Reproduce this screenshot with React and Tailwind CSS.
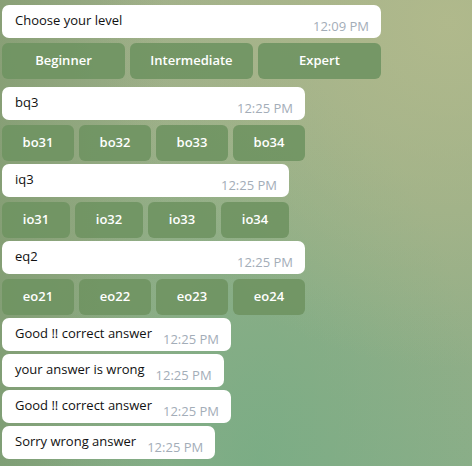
import React from "react";

const font = { fontFamily: '"Open Sans", "Noto Sans", sans-serif' };

function Bubble({ text, time, width, className = "" }) {
  return (
    <div
      className={`h-[33px] flex bg-white rounded-[7px] pl-[13px] pr-[12px] ${className}`}
      style={width ? { width } : undefined}
    >
      <span className="pt-[6px] text-[13px] leading-[18px] text-[#111] whitespace-nowrap">{text}</span>
      <span className="ml-auto pl-[11px] self-end pb-[4px] text-[13px] leading-[16px] text-[#a3adb8] whitespace-nowrap">
        {time}
      </span>
    </div>
  );
}

function Keyboard({ options, width, cols }) {
  return (
    <div
      className={`grid gap-[5px] mt-[5px] ${cols === 3 ? "grid-cols-3" : "grid-cols-4"}`}
      style={{ width }}
    >
      {options.map((o) => (
        <button
          key={o}
          className="h-[36px] rounded-[6px] bg-[#6f9362]/90 text-white text-[13px] font-semibold flex items-center justify-center"
        >
          {o}
        </button>
      ))}
    </div>
  );
}

export default function App() {
  return (
    <div
      className="w-[472px] h-[466px] overflow-hidden bg-[radial-gradient(ellipse_at_95%_5%,rgba(178,186,140,0.9)_0%,rgba(178,186,140,0)_55%),radial-gradient(ellipse_at_55%_100%,rgba(118,172,132,0.75)_0%,rgba(118,172,132,0)_60%),linear-gradient(90deg,rgba(110,140,95,0.45)_0%,rgba(110,140,95,0)_35%),linear-gradient(175deg,#a0b08a_0%,#97ae87_50%,#8aae88_100%)]"
      style={font}
    >
      <div className="flex flex-col items-start pl-[2px] pt-[5px]">
        <Bubble text="Choose your level" time="12:09 PM" width={379} />
        <Keyboard options={["Beginner", "Intermediate", "Expert"]} width={379} cols={3} />

        <Bubble text="bq3" time="12:25 PM" width={303} className="mt-[8px]" />
        <Keyboard options={["bo31", "bo32", "bo33", "bo34"]} width={303} />

        <Bubble text="iq3" time="12:25 PM" width={287} className="mt-[3px]" />
        <Keyboard options={["io31", "io32", "io33", "io34"]} width={287} />

        <Bubble text="eq2" time="12:25 PM" width={303} className="mt-[3px]" />
        <Keyboard options={["eo21", "eo22", "eo23", "eo24"]} width={303} />

        <Bubble text="Good !! correct answer" time="12:25 PM" className="mt-[3px]" />
        <Bubble text="your answer is wrong" time="12:25 PM" className="mt-[3px]" />
        <Bubble text="Good !! correct answer" time="12:25 PM" className="mt-[3px]" />
        <Bubble text="Sorry wrong answer" time="12:25 PM" className="mt-[3px]" />
      </div>
    </div>
  );
}
